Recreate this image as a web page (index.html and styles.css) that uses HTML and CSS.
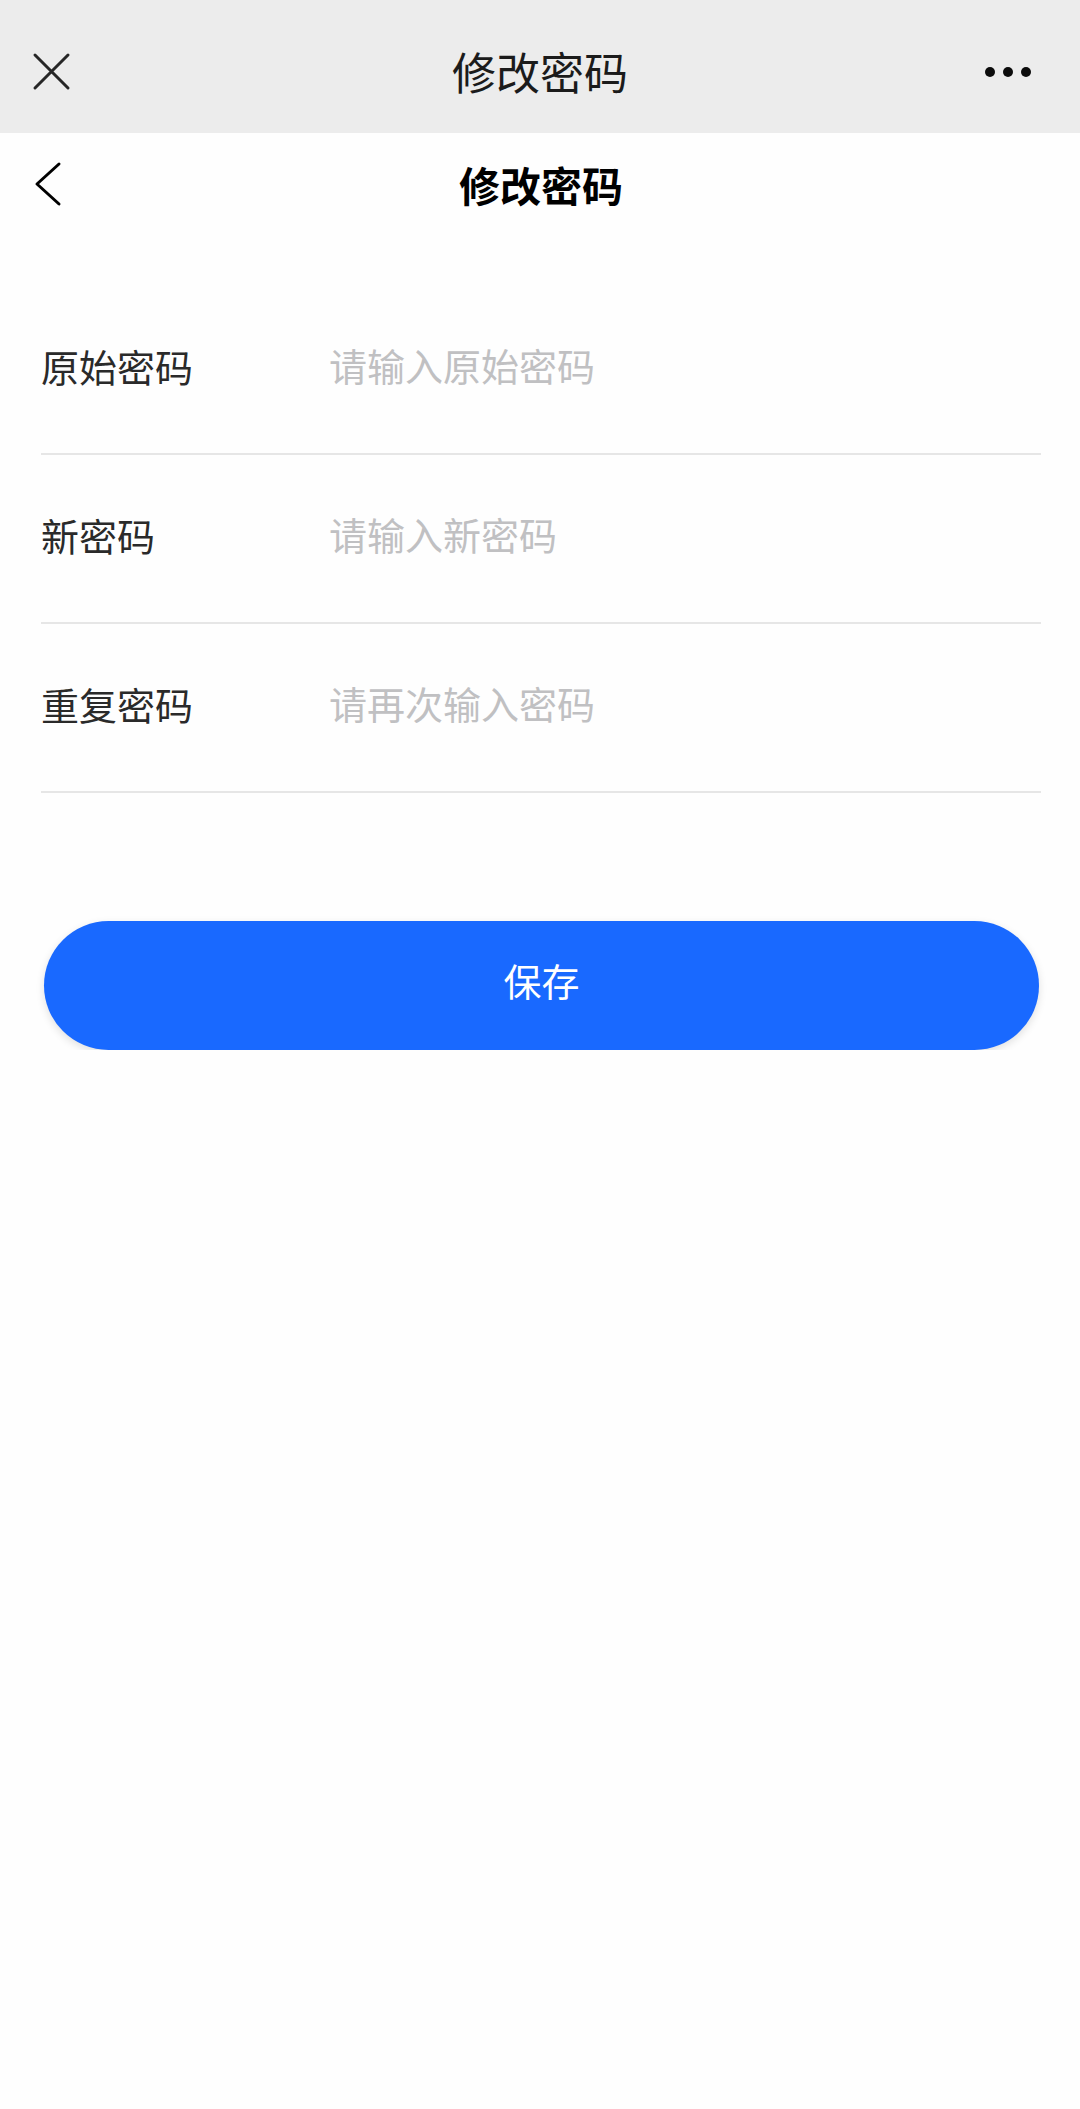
FILE: index.html
```html
<!DOCTYPE html>
<html lang="zh-CN">
<head>
<meta charset="utf-8">
<meta name="viewport" content="width=device-width, initial-scale=1">
<title>修改密码</title>
<link rel="stylesheet" href="styles.css">
</head>
<body>
<header class="app-bar">
  <button class="icon-button" type="button" aria-label="关闭">
    <svg width="40" height="40" viewBox="0 0 40 40"><path d="M3 3 36 36M36 3 3 36"/></svg>
  </button>
  <div class="app-title">修改密码</div>
  <button class="icon-button more" type="button" aria-label="更多">
    <svg class="dots" width="48" height="40" viewBox="0 0 48 40"><circle cx="6" cy="20" r="5"/><circle cx="24" cy="20" r="5"/><circle cx="42" cy="20" r="5"/></svg>
  </button>
</header>
<main>
  <div class="page-bar">
    <a class="back" href="#" aria-label="返回">
      <svg width="32" height="48" viewBox="0 0 32 48"><path d="M27 4 5 24 27 44"/></svg>
    </a>
    <h1 class="page-title">修改密码</h1>
  </div>
  <form class="form">
    <div class="row">
      <label class="label" for="old">原始密码</label>
      <input class="input" id="old" type="password" placeholder="请输入原始密码">
    </div>
    <div class="row">
      <label class="label" for="new">新密码</label>
      <input class="input" id="new" type="password" placeholder="请输入新密码">
    </div>
    <div class="row">
      <label class="label" for="repeat">重复密码</label>
      <input class="input" id="repeat" type="password" placeholder="请再次输入密码">
    </div>
    <button class="save" type="button">保存</button>
  </form>
</main>
</body>
</html>
```

FILE: styles.css
```css
* {
  box-sizing: border-box;
}

body {
  margin: 0;
  background: #fefefe;
  color: #000;
  font-family: "Noto Sans CJK SC", sans-serif;
}

svg {
  display: block;
  fill: none;
  stroke: currentColor;
  stroke-width: 3;
  stroke-linecap: round;
  stroke-linejoin: round;
}

.app-bar,
.page-bar {
  display: grid;
  grid-template-columns: 80px 1fr 80px;
  align-items: center;
  padding: 0 32px;
}

.app-bar {
  padding-top: 10px;
  height: 133px;
  background: #ececec;
  color: #1b1b1b;
}

.icon-button {
  padding: 0;
  border: 0;
  background: none;
  color: #262626;
}

.more {
  justify-self: end;
  padding-right: 16px;
}

.dots {
  fill: #0c0c0c;
  stroke: none;
}

.app-title {
  padding-bottom: 2px;
  font-size: 44px;
  line-height: 60px;
  text-align: center;
}

.page-bar {
  height: 102px;
}

.back {
  color: #000;
}

.page-title {
  margin: 0;
  padding-left: 2px;
  font-size: 41px;
  font-weight: 700;
  line-height: 60px;
  text-align: center;
}

.form {
  padding: 51px 39px 0 41px;
}

.row {
  display: grid;
  grid-template-columns: 288px 1fr;
  align-items: center;
  height: 169px;
  padding-bottom: 8px;
  border-bottom: 2px solid #e6e6e6;
}

.label,
.input {
  font-size: 38px;
  line-height: 56px;
}

.label {
  color: #2a2a2a;
}

.input {
  width: 100%;
  height: 56px;
  padding: 0 0 2px;
  border: 0;
  outline: 0;
  background: none;
  color: #2a2a2a;
  font-family: inherit;
}

.input::placeholder {
  color: #c0c0c2;
  opacity: 1;
}

.save {
  display: block;
  width: calc(100% - 5px);
  height: 129px;
  margin: 128px 2px 0 3px;
  padding: 0 0 12px;
  border: 0;
  border-radius: 65px;
  background: #1969ff;
  box-shadow: 0 3px 8px rgba(0, 0, 0, 0.12);
  color: #fff;
  font-family: inherit;
  font-size: 38px;
}
```
